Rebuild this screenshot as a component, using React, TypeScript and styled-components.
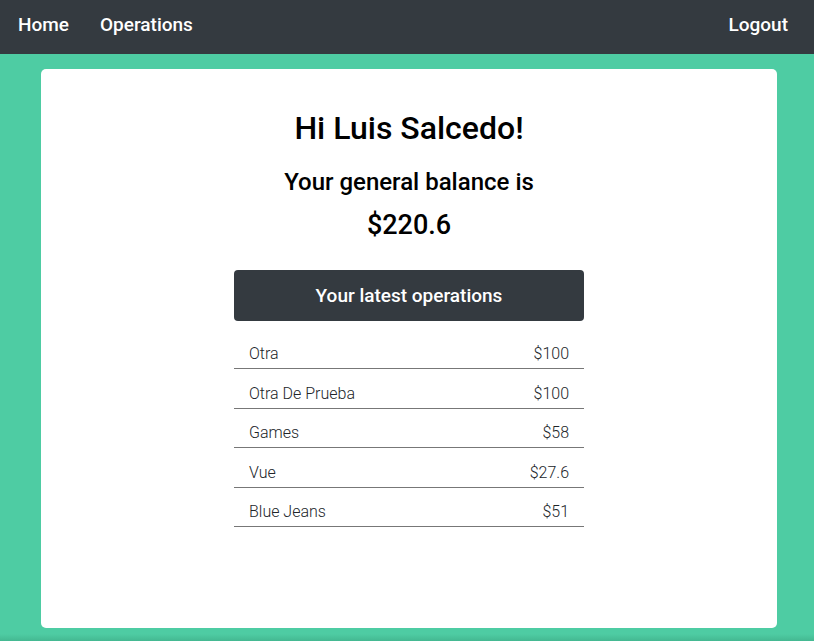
import React from "react";
import styled, { createGlobalStyle } from "styled-components";

const Global = createGlobalStyle`
  html, body { margin: 0; padding: 0; }
  body {
    background: #4ecca3;
    font-family: Roboto, "Liberation Sans", sans-serif;
    color: #212529;
  }
`;

const Page = styled.div`
  min-height: 641px;
  display: flex;
  flex-direction: column;
  background: linear-gradient(to bottom, #4ecca3 0, #4ecca3 634px, #44b891 641px);
`;

const Nav = styled.nav`
  height: 54px;
  background: #343a40;
  display: flex;
  align-items: center;
  padding: 0 26px 0 18px;
  box-sizing: border-box;
`;

const NavLink = styled.a<{ $push?: boolean }>`
  color: #fff;
  font-size: 19px;
  font-weight: 500;
  text-decoration: none;
  margin-right: 31px;
  margin-left: ${(p) => (p.$push ? "auto" : "0")};
  &:last-child { margin-right: 0; }
  line-height: 1;
  padding-bottom: 5px;
`;

const Main = styled.main`
  padding: 15px 37px 0 41px;
`;

const Card = styled.section`
  background: #fff;
  border-radius: 5px;
  height: 559px;
  display: flex;
  flex-direction: column;
  align-items: center;
  padding-top: 40px;
  box-sizing: border-box;
`;

const Title = styled.h1`
  margin: 0;
  font-size: 32px;
  font-weight: 500;
  line-height: 38px;
  color: #000;
`;

const Subtitle = styled.h2`
  margin: 20px 0 0;
  font-size: 24px;
  font-weight: 500;
  line-height: 30px;
  color: #000;
`;

const Amount = styled.div`
  margin-top: 12px;
  font-size: 27px;
  font-weight: 500;
  line-height: 32px;
  color: #000;
`;

const List = styled.div`
  width: 350px;
  margin-top: 29px;
  display: flex;
  flex-direction: column;
`;

const ListHeader = styled.div`
  height: 51px;
  background: #343a40;
  border-radius: 4px;
  color: #fff;
  font-size: 19px;
  font-weight: 500;
  display: flex;
  align-items: center;
  justify-content: center;
  margin-bottom: 8px;
  padding-bottom: 1px;
  box-sizing: border-box;
`;

const Row = styled.div`
  height: 40px;
  box-sizing: border-box;
  border-bottom: 1px solid #777;
  display: flex;
  justify-content: space-between;
  align-items: center;
  padding: 10px 15px 0;
  font-size: 16px;
  font-weight: 300;
  color: #212529;
  & + & { height: 39.5px; }
`;

const ops = [
  ["Otra", "$100"],
  ["Otra De Prueba", "$100"],
  ["Games", "$58"],
  ["Vue", "$27.6"],
  ["Blue Jeans", "$51"],
];

export default function App() {
  return (
    <Page>
      <Global />
      <Nav>
        <NavLink href="#">Home</NavLink>
        <NavLink href="#">Operations</NavLink>
        <NavLink href="#" $push>Logout</NavLink>
      </Nav>
      <Main>
        <Card>
          <Title>Hi Luis Salcedo!</Title>
          <Subtitle>Your general balance is</Subtitle>
          <Amount>$220.6</Amount>
          <List>
            <ListHeader>Your latest operations</ListHeader>
            {ops.map(([n, v]) => (
              <Row key={n}>
                <span>{n}</span>
                <span>{v}</span>
              </Row>
            ))}
          </List>
        </Card>
      </Main>
    </Page>
  );
}
